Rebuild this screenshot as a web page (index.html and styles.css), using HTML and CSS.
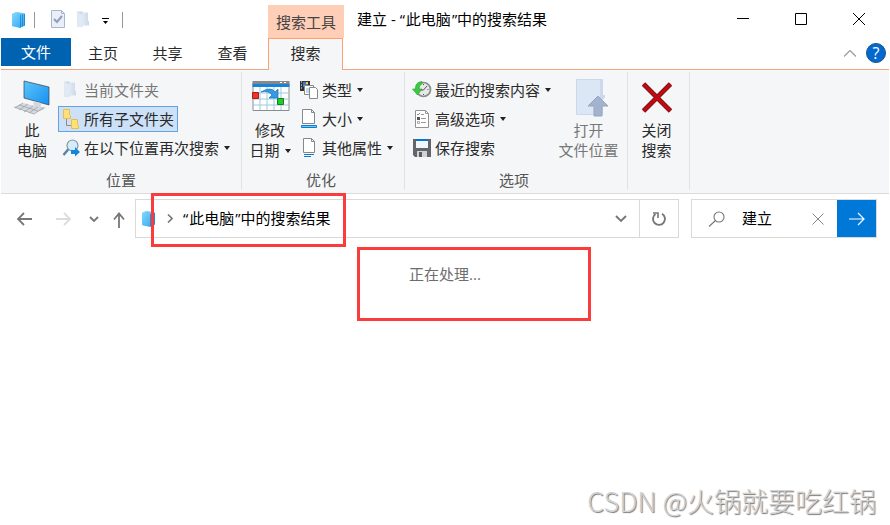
FILE: index.html
```html
<!DOCTYPE html>
<html lang="zh-CN">
<head>
<meta charset="utf-8">
<title>搜索结果</title>
<link rel="stylesheet" href="styles.css">
</head>
<body>
<svg class="defs" width="0" height="0">
  <defs>
    <linearGradient id="blue" x1="0" y1="0" x2="1" y2="1"><stop offset="0" stop-color="#85d9fd"/><stop offset="1" stop-color="#2ba5ef"/></linearGradient>
    <linearGradient id="screen" x1="0" y1="0" x2="1" y2="1"><stop offset="0" stop-color="#5dc5fb"/><stop offset="1" stop-color="#168ff0"/></linearGradient>
    <linearGradient id="pale" x1="0" y1="0" x2="1" y2="0"><stop offset="0" stop-color="#e2eaf6"/><stop offset="1" stop-color="#ccd8e9"/></linearGradient>
    <symbol id="box" viewBox="0 0 15 18"><path d="M1 3 5 1v15l-4-1z" fill="#72d2fb"/><path d="M1 3 6 1l8 1.500v12L9 17l-8-2z" fill="url(#blue)"/><path d="M9.500 4v12.500M11.500 3.500v12M13.500 3v11.500" stroke="#1682cd" stroke-width=".8" fill="none"/></symbol>
    <symbol id="folder" viewBox="0 0 14 16"><path d="M1 0h6v15H1z" fill="#ccd8e7"/><path d="m1 0 5 3v13l-5-1z" fill="#e1e9f4"/><path d="M6 1h6v8l1 1v4H6z" fill="url(#pale)"/></symbol>
  </defs>
</svg>
<div class="window">
  <header class="titlebar">
    <div class="quick">
      <svg class="q-box" width="15" height="18"><use href="#box"/></svg>
      <i class="q-sep"></i>
      <svg class="q-check" width="16" height="19" viewBox="0 0 16 19"><path d="M1.500.5h10l3 3v14h-13z" fill="#e9eef8" stroke="#a9b6cf"/><path d="M11.500.5v3h3" fill="none" stroke="#a9b6cf"/><path d="m4 9 3 3 5-6" fill="none" stroke="#8f9fbb" stroke-width="2"/></svg>
      <svg class="q-folder" width="14" height="17"><use href="#folder"/></svg>
      <svg class="q-more" width="7" height="6" viewBox="0 0 7 6"><path d="M0 0h7v1H0zM1 3h5L3.500 6z"/></svg>
      <i class="q-sep"></i>
    </div>
    <div class="context">搜索工具</div>
    <div class="title">建立 - <span class="open">“</span>此电脑<span class="shut">”</span>中的搜索结果</div>
    <div class="controls">
      <svg width="12" height="12" viewBox="0 0 12 12"><path d="M0 5.500h12"/></svg>
      <svg width="12" height="12" viewBox="0 0 12 12"><path d="M.5.5h11v11H.5z"/></svg>
      <svg width="12" height="12" viewBox="0 0 12 12"><path d="m0 0 12 12M12 0 0 12"/></svg>
    </div>
  </header>
  <nav class="tabs">
    <span class="tab file">文件</span>
    <span class="tab">主页</span>
    <span class="tab">共享</span>
    <span class="tab">查看</span>
    <span class="tab active">搜索</span>
    <div class="help">
      <svg width="12" height="7" viewBox="0 0 12 7"><path d="m0 6.500 6-6 6 6" fill="none" stroke="#a0a0a0" stroke-width="1.300"/></svg>
      <span class="q">?</span>
    </div>
  </nav>
  <section class="ribbon">
    <div class="group g-pos">
      <div class="tools">
        <div class="big">
          <svg width="38" height="38" viewBox="0 0 38 38"><path d="m11 2 25 6v18L11 19z" fill="url(#screen)" stroke="#34424e" stroke-width=".7"/><path d="m20 22 8 2v4l4 2-8 3-7-3 4-2z" fill="#d5d9dc"/><path d="m26 29 7-1-7 4-8-2z" fill="#a7adb2"/><path d="M1 28 10 24l20 5-9 6z" fill="#d5d9dd"/><path d="m1 28 20 7 9-6M6 26l19 6M10 24l-8 5M15 25l-9 6M20 27l-9 6M25 28l-9 6" fill="none" stroke="#9da4ab" stroke-width=".8"/></svg>
          <span>此</span><span>电脑</span>
        </div>
        <div class="list">
          <div class="item off"><svg width="18" height="20" viewBox="0 0 18 20"><use href="#folder" x="1" y="1" width="14" height="17"/></svg>当前文件夹</div>
          <div class="item on"><svg width="18" height="20" viewBox="0 0 18 20"><path d="M4.500 10v6.500H9" fill="none" stroke="#8c8c8c"/><path d="M1.500.5h6v5l1 1v3h-7z" fill="#ffdf78" stroke="#e8bf4d"/><path d="M9.500 10.500h6v5l1 1v3h-7z" fill="#ffdf78" stroke="#e8bf4d"/></svg>所有子文件夹</div>
          <div class="item"><svg width="18" height="18" viewBox="0 0 18 18"><path d="m6.500 10-5 6" stroke="#5381aa" stroke-width="2.400"/><circle cx="10.500" cy="6.500" r="5.500" fill="#d4ebfc" stroke="#8397a4" stroke-width="1.200"/><path d="M9 11h4V8l5 5-5 4.500V15H9z" fill="#1684d7"/></svg>在以下位置再次搜索<b class="drop"></b></div>
        </div>
      </div>
      <div class="label">位置</div>
    </div>
    <div class="group g-opt">
      <div class="tools">
        <div class="big">
          <svg width="38" height="38" viewBox="0 0 38 38"><path d="M1 4h36v27.500H1z" fill="#fff" stroke="#8a8d90"/><path d="M.5 2h37v3H.5z" fill="#85898e"/><path d="M.5 5h37v3H.5z" fill="#1583d8"/><path d="M8 8v23M15 8v23M22 8v23M29 8v23M1 14h36M1 20h36M1 26h36" stroke="#9ccae2"/><path d="M28 3.500h2m2 0h2" stroke="#fff"/><path d="M.5 13.500h6v6h-6z" fill="#f13229" stroke="#ae1c18"/><path d="M25.500 19.500h6v6h-6z" fill="#24ca31" stroke="#118319"/><path d="M9 13q10-6 14 0l3-3v9h-9l3-3q-4-5-11-3z" fill="#3798e4" stroke="#1674ba" stroke-width=".7"/></svg>
          <span>修改</span><span>日期<b class="drop"></b></span>
        </div>
        <div class="list">
          <div class="item"><svg width="20" height="20" viewBox="0 0 20 20"><path d="M1 1h10v10H1z" fill="#333"/><path d="M2 2h1m-1 3h1m-1 3h1" stroke="#fff"/><path d="M4 2h5v5H4z" fill="#3d7ad0"/><path d="M7 2h2v2H7z" fill="#f2cf45"/><path d="M5.500 5.500h9v9h-9z" fill="#fff" stroke="#888"/><path d="M7 8h6v5H7z" fill="#bedaf1"/><path d="M10.500 7.500h6l2 2v9h-8z" fill="#fff" stroke="#888"/></svg>类型<b class="drop"></b></div>
          <div class="item"><svg width="20" height="20" viewBox="0 0 20 20"><path d="M3.500.5h9l3 3v11h-12z" fill="#fff" stroke="#888"/><path d="M12.500.5v3h3" fill="none" stroke="#888"/><path d="M2.500 16.500h15v2h-15z" fill="#67cdf7" stroke="#1679c8"/></svg>大小<b class="drop"></b></div>
          <div class="item"><svg width="20" height="20" viewBox="0 0 20 20"><path d="M4.500.5h8l3 3v11h-11z" fill="#fff" stroke="#888"/><path d="M12.500.5v3h3" fill="none" stroke="#888"/><path d="M5 16.500h10M5 18.500h7" stroke="#1679c8"/></svg>其他属性<b class="drop"></b></div>
        </div>
      </div>
      <div class="label">优化</div>
    </div>
    <div class="group g-set">
      <div class="tools">
        <div class="list">
          <div class="item"><svg width="20" height="18" viewBox="0 0 20 18"><circle cx="11.500" cy="8.500" r="7" fill="#e5e8e6" stroke="#898e8a" stroke-width="1.700"/><path d="m15 5-3.500 4H7M11.500 3v1m0 9v1m5-5.500h-1" stroke="#555" fill="none"/><path d="M10 .5Q3 1 3.500 8H.5l5 6 4.500-6H7q0-4 3-5z" fill="#3bc942" stroke="#279f2d" stroke-width=".6"/></svg>最近的搜索内容<b class="drop"></b></div>
          <div class="item"><svg width="20" height="18" viewBox="0 0 20 18"><path d="M3.500.5h10l3 3v14h-13z" fill="#fff" stroke="#929292"/><path d="M13.500.5v3h3M9 4.500h3M9 8.500h5M9 12.500h5" fill="none" stroke="#999"/><path d="M5 7h3v3H5z" fill="#555"/><path d="M5.500 11.500h2v2h-2z" fill="#fff" stroke="#aaa"/><path d="m5 4 1 1 2-2" fill="none" stroke="#888"/></svg>高级选项<b class="drop"></b></div>
          <div class="item"><svg width="20" height="18" viewBox="0 0 20 18"><path d="M1 0h18v18H3l-2-2z" fill="#626569"/><path d="M4 0h12v9H4z" fill="#f1f6fb"/><path d="M4 0h12v2H4z" fill="#0874d1"/><path d="M5 12h10v6H5z" fill="#d0d2d4"/><path d="M7 13h3v5H7z" fill="#595c60"/></svg>保存搜索</div>
        </div>
        <div class="big off">
          <svg width="38" height="38" viewBox="0 0 38 38"><path d="M6.500.5h26v35h-26z" fill="#dce7f5" stroke="#cad8eb"/><path d="M30 1v35h3V20l2-1V16h-2V1z" fill="#cbd9ed"/><path d="m28 17 10 10h-6v10h-8V27h-6z" fill="#a4b3cd" stroke="#96a6c1"/></svg>
          <span>打开</span><span>文件位置</span>
        </div>
      </div>
      <div class="label">选项</div>
    </div>
    <div class="group g-close">
      <div class="tools">
        <div class="big">
          <svg width="38" height="38" viewBox="0 0 38 38"><path d="m5.500 5 27 27m0-27-27 27" stroke="#71191c" stroke-width="4.800"/><path d="m5.500 5 27 27m0-27-27 27" stroke="#c90712" stroke-width="3"/></svg>
          <span>关闭</span><span>搜索</span>
        </div>
      </div>
    </div>
  </section>
  <section class="navbar">
    <svg class="arrows" width="124" height="24" viewBox="0 0 124 24" fill="none" stroke-width="1.800"><path d="M31 12H17m6-6-6 6 6 6" stroke="#777"/><path d="M55 12h14m-6-6 6 6-6 6" stroke="#dcdcdc"/><path d="m89 10 4 4 4-4" stroke="#777"/><path d="M118 21V7m-5 5.500 5-6 5 6" stroke="#777"/></svg>
    <div class="address">
      <svg class="a-box" width="15" height="18"><use href="#box"/></svg>
      <svg class="a-chev" width="6" height="9" viewBox="0 0 6 9"><path d="m1 .5 4 4-4 4" fill="none" stroke="#777" stroke-width="1.600"/></svg>
      <span class="path"><span class="open">“</span>此电脑<span class="shut">”</span>中的搜索结果</span>
      <svg class="a-down" width="12" height="8" viewBox="0 0 12 8"><path d="m1 1 5 5 5-5" fill="none" stroke="#777" stroke-width="1.900"/></svg>
      <div class="refresh"><svg width="16" height="16" viewBox="0 0 16 16" fill="none" stroke="#777" stroke-width="1.900"><path d="M11 2.700A6 6 0 1 1 4.500 3"/><path d="M2 2h5v5" stroke-width="1.600"/></svg></div>
    </div>
    <div class="search">
      <svg class="s-glass" width="17" height="16" viewBox="0 0 17 16" fill="none" stroke="#777" stroke-width="1.100"><circle cx="11" cy="6" r="5"/><path d="m7.500 9.500-6.500 6"/></svg>
      <span class="query">建立</span>
      <svg class="s-clear" width="12" height="12" viewBox="0 0 12 12"><path d="m.5.5 11 11m0-11-11 11" stroke="#858585" fill="none"/></svg>
      <div class="go"><svg width="16" height="14" viewBox="0 0 16 14"><path d="M0 7h15M9 1l6 6-6 6" fill="none" stroke="#fff" stroke-width="1.200"/></svg></div>
    </div>
  </section>
  <main class="content">
    <p class="status">正在处理...</p>
    <p class="watermark">CSDN @火锅就要吃红锅</p>
  </main>
  <div class="mark mark-path"></div>
  <div class="mark mark-status"></div>
</div>
</body>
</html>
```

FILE: styles.css
```css
* { box-sizing: border-box; }
body {
  margin: 0;
  background: #fff;
  color: #2a2a2a;
  font: 15px/20px "Open Sans", "Noto Sans CJK SC", sans-serif;
  overflow: hidden;
}
p { margin: 0; }
svg { display: block; flex: none; }
.defs { position: absolute; }
.open { margin-right: 1px; }
.shut { margin-left: 1px; }
.window {
  position: relative;
  display: flex;
  flex-direction: column;
  width: 888px;
  height: 525px;
  margin-left: 1px;
  white-space: nowrap;
}

.titlebar { display: flex; height: 38px; }
.quick { display: flex; align-items: center; width: 267px; padding: 1px 0 0 10px; }
.q-sep { width: 1px; height: 16px; margin-left: 8px; background: #999; }
.q-check { margin-left: 15px; }
.q-folder { margin-left: 10px; }
.q-more { margin: 3px 0 0 12px; }
.q-more + .q-sep { margin-left: 13px; }
.context {
  width: 76px;
  height: 33px;
  margin-top: 5px;
  padding-top: 7px;
  background: #ffceb6;
  color: #444;
  text-align: center;
}
.title { margin-left: 13px; padding-top: 9px; color: #000; }
.controls {
  display: flex;
  gap: 46px;
  margin: 13px 24px 0 auto;
  fill: none;
  stroke: #000;
}
.controls svg:first-child { margin-right: 0; }

.tabs { display: flex; height: 32px; border-bottom: 1px solid #f5a780; }
.tab { width: 65px; height: 31px; padding-top: 5px; text-align: center; }
.tab.file { width: 70px; height: 28px; background: #0063b1; color: #fff; padding-top: 4px; }
.tab.file + .tab { width: 64px; }
.tab.active {
  width: 75px;
  height: 32px;
  margin-left: 3px;
  padding-top: 4px;
  border: 1px solid #ffa06d;
  border-bottom: 0;
  background: #f5f6f7;
}
.help { display: flex; align-items: center; gap: 10px; height: 30px; margin: 0 3px 0 auto; }
.q {
  width: 20px;
  height: 20px;
  border: 1px solid #16548c;
  border-radius: 50%;
  background: #0369ce;
  color: #fff;
  font-size: 16px;
  line-height: 18px;
  text-align: center;
}

.ribbon {
  display: flex;
  height: 124px;
  padding-top: 2px;
  border-bottom: 1px solid #dadbdc;
  background: #f5f6f7;
}
.group { height: 118px; border-right: 1px solid #e0e2e4; }
.tools { display: flex; height: 98px; padding-top: 5px; }
.label { color: #555; text-align: center; line-height: 20px; }
.g-opt .label, .g-set .label { padding-right: 4px; }
.g-pos { width: 241px; }
.g-opt { width: 163px; }
.g-set { width: 223px; }
.g-close { width: 62px; }
.big { display: flex; flex-direction: column; align-items: center; }
.big svg { margin: 2px 0 3px; }
.big.off, .item.off { color: #777; }
.g-pos .big { width: 57px; padding-left: 5px; }
.g-opt .big { width: 58px; }
.g-opt .big span { margin-right: 2px; }
.g-set .big { width: 74px; margin-left: auto; margin-right: 5px; }
.g-close .big { width: 57px; }
.list { display: flex; flex-direction: column; gap: 3px; align-items: flex-start; }
.item {
  display: flex;
  align-items: center;
  height: 26px;
  padding: 0 3px;
  border: 1px solid transparent;
}
.item svg { margin-right: 3px; }
.g-pos .item svg { margin-right: 4px; }
.item.on { border-color: #64a3e0; background: #cce1f8; }
.g-opt .item { padding-left: 0; }
.g-opt .list { margin-left: -2px; }
.g-set .list { padding-left: 3px; }
.g-set .item svg { margin-right: 3px; }
.drop {
  display: inline-block;
  width: 0;
  height: 0;
  margin-left: 5px;
  border: 3px solid transparent;
  border-top: 4px solid #222;
  border-bottom: 0;
  vertical-align: 3px;
}

.navbar { display: flex; height: 50px; padding-top: 5px; }
.arrows { margin: 8px 10px 0 0; }
.address {
  display: flex;
  align-items: center;
  width: 544px;
  height: 39px;
  border: 1px solid #d9d9d9;
  color: #000;
}
.a-box { margin-left: 5px; }
.a-chev { margin-left: 11px; }
.path { margin: 0 0 2px 10px; }
.a-down { margin-left: auto; margin-right: 12px; }
.refresh {
  display: grid;
  place-items: center;
  width: 39px;
  height: 37px;
  border-left: 1px solid #d9d9d9;
}
.search {
  display: flex;
  align-items: center;
  width: 186px;
  height: 39px;
  margin-left: 12px;
  border: 1px solid #d9d9d9;
  color: #000;
}
.s-glass { margin-left: 16px; }
.query { margin: 0 0 2px 17px; }
.s-clear { margin-left: auto; margin-right: 13px; }
.go { display: grid; place-items: center; width: 39px; height: 37px; background: #0078d7; }

.content { display: flex; flex: 1; flex-direction: column; justify-content: space-between; }
.status { padding: 20px 0 0 408px; color: #6d6d6d; }
.watermark {
  align-self: flex-end;
  margin: 0 13px 5px 0;
  color: #d2d2d2;
  font: 300 27px/38px "Noto Sans CJK SC", sans-serif;
  text-shadow: 1px 1px 1px #777;
}
.mark { position: absolute; border: 3px solid #fa3c3c; }
.mark-path { left: 150px; top: 193px; width: 195px; height: 54px; }
.mark-status { left: 356px; top: 247px; width: 234px; height: 74px; }
```
